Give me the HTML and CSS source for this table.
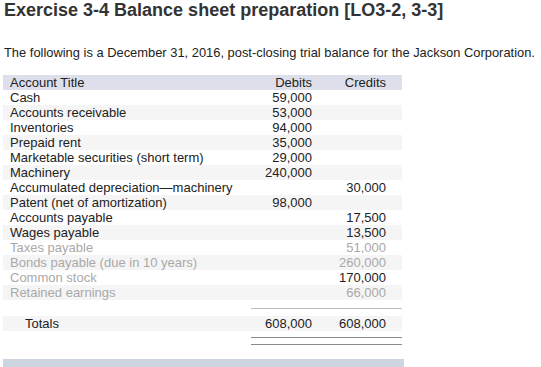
FILE: index.html
```html
<!DOCTYPE html>
<html>
<head>
<meta charset="utf-8">
<link rel="stylesheet" href="styles.css">
</head>
<body>
<h1 class="title">Exercise 3-4 Balance sheet preparation [LO3-2, 3-3]</h1>
<p class="intro">The following is a December 31, 2016, post-closing trial balance for the Jackson Corporation.</p>
<div class="tb">
  <div class="row head"><span class="lbl">Account Title</span><span class="num">Debits</span><span class="num">Credits</span></div>
  <div class="row"><span class="lbl">Cash</span><span class="num">59,000</span><span class="num"></span></div>
  <div class="row alt"><span class="lbl">Accounts receivable</span><span class="num">53,000</span><span class="num"></span></div>
  <div class="row"><span class="lbl">Inventories</span><span class="num">94,000</span><span class="num"></span></div>
  <div class="row alt"><span class="lbl">Prepaid rent</span><span class="num">35,000</span><span class="num"></span></div>
  <div class="row"><span class="lbl">Marketable securities (short term)</span><span class="num">29,000</span><span class="num"></span></div>
  <div class="row alt"><span class="lbl">Machinery</span><span class="num">240,000</span><span class="num"></span></div>
  <div class="row"><span class="lbl">Accumulated depreciation—machinery</span><span class="num"></span><span class="num">30,000</span></div>
  <div class="row alt"><span class="lbl">Patent (net of amortization)</span><span class="num">98,000</span><span class="num"></span></div>
  <div class="row"><span class="lbl">Accounts payable</span><span class="num"></span><span class="num">17,500</span></div>
  <div class="row alt"><span class="lbl">Wages payable</span><span class="num"></span><span class="num">13,500</span></div>
  <div class="row faint"><span class="lbl">Taxes payable</span><span class="num"></span><span class="num">51,000</span></div>
  <div class="row alt faint"><span class="lbl">Bonds payable (due in 10 years)</span><span class="num"></span><span class="num">260,000</span></div>
  <div class="row faint"><span class="lbl">Common stock</span><span class="num"></span><span class="num dark">170,000</span></div>
  <div class="row alt faint"><span class="lbl">Retained earnings</span><span class="num"></span><span class="num">66,000</span></div>
  <div class="rule single"></div>
  <div class="row alt total"><span class="lbl">Totals</span><span class="num">608,000</span><span class="num">608,000</span></div>
  <div class="rule double"></div>
</div>
<div class="bar"></div>
</body>
</html>
```

FILE: styles.css
```css
html, body {
  margin: 0;
  padding: 0;
  background: #ffffff;
}
body {
  padding: 0 3px;
  font-family: "Liberation Sans", Arial, sans-serif;
  color: #222222;
}
.title {
  margin: 0;
  padding-left: 1px;
  font-size: 18px;
  line-height: 20px;
  font-weight: bold;
  color: #333333;
  white-space: nowrap;
}
.intro {
  margin: 25px 0 0 1px;
  font-size: 12.9px;
  line-height: 16px;
  color: #222222;
  white-space: nowrap;
}
.tb {
  margin-top: 14px;
  width: 399px;
  font-size: 13px;
}
.row {
  display: grid;
  grid-template-columns: 1fr 62px 74px;
  padding: 0 16px 0 7px;
  height: 15px;
  line-height: 15px;
  white-space: nowrap;
}
.row.head {
  background: #dde0ea;
}
.row.alt {
  background: #f5f5f5;
}
.num {
  text-align: right;
}
.faint {
  color: #a9a9a9;
}
.faint .dark {
  color: #222222;
}
.rule {
  margin-left: 248px;
}
.rule.single {
  margin-top: 8px;
  height: 0;
  border-top: 1px solid #bdbdbd;
  margin-bottom: 7px;
}
.row.total .lbl {
  padding-left: 15px;
}
.rule.double {
  margin-top: 6px;
  height: 6px;
  border-top: 1px solid #8a8a8a;
  border-bottom: 1px solid #8a8a8a;
}
.bar {
  margin-top: 14px;
  width: 401px;
  height: 10px;
  background: #ccd5e0;
}
```
